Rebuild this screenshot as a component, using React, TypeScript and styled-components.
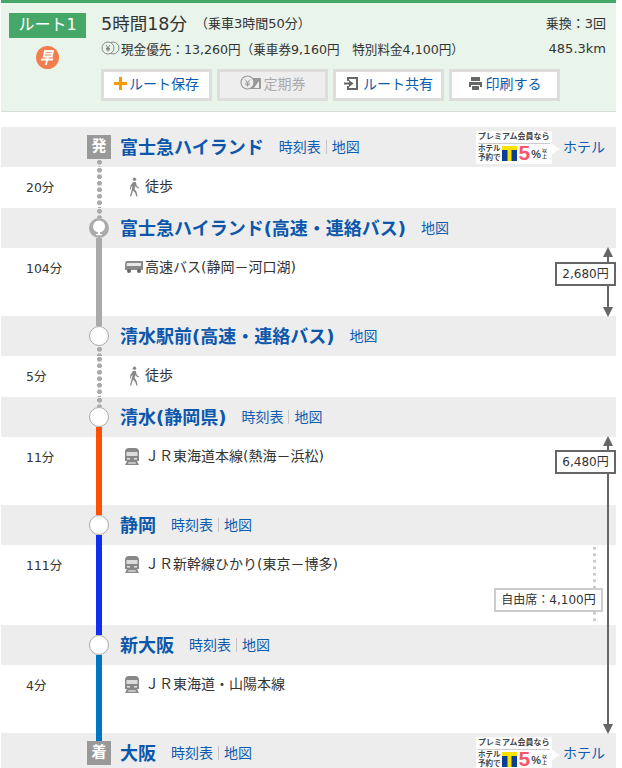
import React from "react";
import styled, { createGlobalStyle } from "styled-components";

const GlobalStyle = createGlobalStyle`
  html, body {
    margin: 0;
    padding: 0;
    background: #fff;
    overflow: hidden;
    height: 768px;
  }
  body {
    font-family: "DejaVu Sans", "Noto Sans CJK JP", sans-serif;
    color: #333;
  }
`;

const Page = styled.div`
  width: 615px;
  margin-left: 1px;
`;

const Summary = styled.section`
  box-sizing: border-box;
  height: 112px;
  background: #e9f4ea;
  border-top: 3px solid #45a869;
  border-bottom: 1px solid #d8dcd8;
  padding: 10px 10px 0 8px;
  display: grid;
  grid-template-columns: 77px 1fr;
  column-gap: 15px;
`;

const RouteSide = styled.div`
  display: flex;
  flex-direction: column;
  align-items: center;
  gap: 8px;
`;

const RouteBadge = styled.div`
  width: 77px;
  height: 25px;
  background: #45a869;
  color: #fff;
  font-size: 16px;
  line-height: 23px;
  text-align: center;
`;

const RouteMain = styled.div`
  display: flex;
  flex-direction: column;
`;

const InfoRow = styled.div`
  display: flex;
  align-items: center;
  justify-content: space-between;
  height: 18px;
  & + & {
    margin-top: 8px;
  }
`;

const InfoLeft = styled.div`
  display: flex;
  align-items: center;
`;

const Duration = styled.span`
  font-size: 17.5px;
  color: #333;
`;

const Ride = styled.span`
  font-size: 13px;
  margin-left: 8px;
`;

const Fare = styled.span`
  font-size: 12.6px;
  margin-left: 1px;
`;

const InfoRight = styled.span`
  font-size: 13px;
`;

const Buttons = styled.div`
  display: flex;
  gap: 5px;
  margin-top: 12px;
`;

const Button = styled.div<{ $disabled?: boolean }>`
  box-sizing: border-box;
  width: 111px;
  height: 32px;
  border: 3px solid #ddd;
  padding-bottom: 4px;
  background: ${(p) => (p.$disabled ? "#eee" : "#fff")};
  color: ${(p) => (p.$disabled ? "#aaa" : "#0b5cb0")};
  font-size: 14px;
  display: flex;
  align-items: center;
  justify-content: center;
  gap: 2px;
`;

const Timeline = styled.main`
  margin-top: 15px;
`;

const StationRow = styled.div`
  height: 40px;
  background: #ededed;
  display: grid;
  grid-template-columns: 86px 24px 1fr;
`;

const Rail = styled.div`
  display: flex;
  flex-direction: column;
  align-items: center;
`;

const Stub = styled.div<{ $kind?: string }>`
  flex: 1;
  width: ${(p) => (p.$kind === "dots" ? "5px" : "6px")};
  ${(p) =>
    p.$kind === "dots"
      ? `background: radial-gradient(circle at center, #aaa 2.4px, transparent 2.7px) center top / 5px 6.5px repeat-y;`
      : p.$kind
        ? `background: ${p.$kind};`
        : ""}
`;

const EndMark = styled.div`
  width: 24px;
  height: 24px;
  flex: none;
  background: #999;
  color: #fff;
  font-size: 15px;
  font-weight: 700;
  line-height: 22px;
  text-align: center;
`;

const Circle = styled.div`
  box-sizing: border-box;
  width: 20px;
  height: 20px;
  flex: none;
  border-radius: 50%;
  background: #fff;
  border: 1px solid #aaa;
`;

const StationBody = styled.div`
  display: flex;
  align-items: center;
  padding: 0 0 3px 9px;
`;

const StationName = styled.span`
  color: #0b57ab;
  font-size: 18px;
  font-weight: 700;
  margin-right: 15px;
`;

const Links = styled.span`
  display: flex;
  align-items: center;
  font-size: 14px;
  color: #0b5cb0;
`;

const LinkSep = styled.span`
  width: 1px;
  height: 14px;
  background: #c4c4c4;
  margin: 2px 5px 0;
`;

const HotelBox = styled.div`
  margin-left: auto;
  display: flex;
  align-items: center;
  margin-top: 3px;
`;

const Promo = styled.div`
  position: relative;
  box-sizing: border-box;
  width: 76px;
  height: 33px;
  background: #fff;
  color: #444;
  font-weight: 700;
  padding: 0 2px;
  margin-right: 11px;
  &::after {
    content: "";
    position: absolute;
    right: -8px;
    top: 13px;
    border-left: 8px solid #fff;
    border-top: 5px solid transparent;
    border-bottom: 5px solid transparent;
  }
`;

const PromoTop = styled.div`
  height: 12px;
  font-size: 8px;
  line-height: 11px;
  white-space: nowrap;
  border-bottom: 1px solid #ccc;
`;

const PromoBottom = styled.div`
  display: flex;
  align-items: center;
  height: 19px;
  gap: 1px;
`;

const PromoText = styled.div`
  font-size: 7.5px;
  line-height: 9px;
  white-space: nowrap;
`;

const PromoFive = styled.span`
  color: #f5566c;
  font-size: 21px;
  font-family: "Liberation Sans", sans-serif;
  line-height: 18px;
  margin-left: 1px;
`;

const PromoPct = styled.span`
  font-family: "Liberation Sans", sans-serif;
  font-size: 11px;
  line-height: 18px;
  margin-top: 2px;
`;

const PromoOver = styled.span`
  font-size: 5px;
  line-height: 6px;
  width: 5px;
`;

const Hotel = styled.span`
  color: #0b5cb0;
  font-size: 14px;
  margin: -3px 11px 0 0;
`;

const Segment = styled.div<{ $h: number }>`
  position: relative;
  height: ${(p) => p.$h}px;
  display: grid;
  grid-template-columns: 86px 24px 1fr;
`;

const Time = styled.div`
  padding: 12px 0 0 25px;
  font-size: 12.4px;
  line-height: 18px;
`;

const Transit = styled.div`
  display: flex;
  align-items: flex-start;
  padding: 10px 0 0 13px;
  font-size: 14px;
  line-height: 19px;
  color: #333;
  gap: 5px;
`;

const FareRail = styled.div<{ $h: number }>`
  position: absolute;
  z-index: 2;
  right: 0;
  top: -1px;
  height: ${(p) => p.$h}px;
  width: 62px;
  display: flex;
  flex-direction: column;
  align-items: flex-end;
`;

const ArrowUp = styled.div`
  flex: none;
  margin-right: 3px;
  border-left: 5px solid transparent;
  border-right: 5px solid transparent;
  border-bottom: 10px solid #666;
`;

const ArrowDown = styled(ArrowUp)`
  border-bottom: 0;
  border-top: 10px solid #666;
`;

const RailLine = styled.div<{ $fixed?: number }>`
  width: 2px;
  margin-right: 7px;
  background: #666;
  flex: ${(p) => (p.$fixed ? `0 0 ${p.$fixed}px` : "1")};
`;

const FareBox = styled.div`
  box-sizing: border-box;
  width: 61px;
  height: 24px;
  flex: none;
  border: 2px solid #666;
  background: #fff;
  font-size: 12px;
  line-height: 20px;
  text-align: center;
  white-space: nowrap;
`;

const SeatDots = styled.div`
  position: absolute;
  right: 20px;
  top: 0;
  bottom: 0;
  width: 3px;
  background: radial-gradient(circle at center, #ccc 1.4px, transparent 1.7px) center top / 3px 6.5px repeat-y;
`;

const SeatBox = styled.div`
  position: absolute;
  right: 13px;
  top: 43px;
  box-sizing: border-box;
  width: 109px;
  height: 24px;
  border: 2px solid #ccc;
  background: #fff;
  font-size: 12px;
  line-height: 20px;
  text-align: center;
  white-space: nowrap;
`;

const TrainIcon = () => (
  <svg width="16" height="19" viewBox="0 0 16 19">
    <path d="M1 5 Q1 1 5 1 H11 Q15 1 15 5 V14 H1 Z" fill="#888" />
    <rect x="2.5" y="5" width="11" height="4" fill="#ddd" />
    <rect x="3" y="11" width="3" height="1.6" fill="#ddd" />
    <rect x="10" y="11" width="3" height="1.6" fill="#ddd" />
    <path d="M3 14 L1 18 H15 L13 14 Z M4.4 15.4 L4 16.6 H12 L11.6 15.4 Z" fill="#888" fillRule="evenodd" />
  </svg>
);

const BusIcon = () => (
  <svg width="20" height="14" viewBox="0 0 20 14" style={{ marginTop: 2, marginRight: -4 }}>
    <path d="M2 1 H19 V10 H1 V4 Z" fill="#888" />
    <path d="M3 3 H17 V6 H2.4 Z" fill="#e8e8e8" />
    <circle cx="5" cy="11" r="2" fill="#666" />
    <circle cx="15" cy="11" r="2" fill="#666" />
  </svg>
);

const WalkIcon = () => (
  <svg width="13" height="20" viewBox="0 0 13 20" style={{ marginLeft: 3 }}>
    <circle cx="7.5" cy="2.2" r="1.7" fill="#888" />
    <path
      d="M6 5 L8.8 5 L9.8 9 L12.2 10.8 L11.6 11.6 L8.8 10 L8.4 8.6 L7.6 12 L9.6 15 L10.6 19.4 L9.4 19.4 L8.2 16 L6 13.4 L4.2 19.4 L3 19.4 L5.6 9 L4.4 10 L3.8 12.6 L2.8 12.2 L3.6 8.6 Z"
      fill="#888"
    />
  </svg>
);

const EarlyIcon = () => (
  <svg width="23" height="23" viewBox="0 0 23 23">
    <circle cx="11.5" cy="11.5" r="11.5" fill="#f47d4f" />
    <g transform="skewX(-12) translate(3 0)" fill="none" stroke="#fff" strokeWidth="1.8">
      <rect x="7" y="5" width="8" height="5.5" />
      <path d="M7 7.7 H15 M5 13.5 H17 M11 10.5 V19" />
    </g>
  </svg>
);

const CoinIcon = () => (
  <svg width="19" height="14" viewBox="0 0 19 14">
    <circle cx="12" cy="7" r="6" fill="none" stroke="#888" strokeWidth="1" />
    <circle cx="7" cy="7" r="6" fill="#e9f4ea" stroke="#888" strokeWidth="1" />
    <path d="M5 4 L7 7 L9 4 M7 7 V10.4 M5 7.4 H9 M5 8.8 H9" stroke="#777" strokeWidth="0.9" fill="none" />
  </svg>
);

const PassIcon = () => (
  <svg width="22" height="16" viewBox="0 0 22 16">
    <rect x="9" y="3" width="12" height="11" rx="1" fill="#999" />
    <path d="M14 13 L19 6 V13 Z" fill="#eee" />
    <circle cx="7.5" cy="7.5" r="6.5" fill="#eee" stroke="#999" strokeWidth="1.2" />
    <path d="M5 4.5 L7.5 7.5 L10 4.5 M7.5 7.5 V11.5 M5.2 8 H9.8 M5.2 9.8 H9.8" stroke="#999" strokeWidth="1" fill="none" />
  </svg>
);

const ShareIcon = () => (
  <svg width="15" height="15" viewBox="0 0 15 15" style={{ marginRight: 2 }}>
    <path d="M3 5 V1 H14 V14 H3 V10 H5 V12 H12 V3 H5 V5 Z" fill="#666" />
    <path d="M0 6.5 H5 V4 L9.5 7.5 L5 11 V8.5 H0 Z" fill="#666" />
  </svg>
);

const PrintIcon = () => (
  <svg width="15" height="15" viewBox="0 0 15 15" style={{ marginRight: 1 }}>
    <path d="M3 1 H12 V5 H3 Z" fill="#666" />
    <path d="M1 6 H14 V11 H12 V9 H3 V11 H1 Z" fill="#666" />
    <path d="M4 10 H11 V14 H4 Z" fill="#666" />
  </svg>
);

const PlusIcon = () => (
  <svg width="13" height="13" viewBox="0 0 13 13">
    <path d="M5 0 H8 V5 H13 V8 H8 V13 H5 V8 H0 V5 H5 Z" fill="#f59a00" />
  </svg>
);

const BusStopCircle = () => (
  <svg width="20" height="20" viewBox="0 0 20 20" style={{ flex: "none" }}>
    <circle cx="10" cy="10" r="10" fill="#aaa" />
    <circle cx="10" cy="8.6" r="6" fill="#fff" />
    <rect x="9" y="13" width="2" height="4" fill="#fff" />
    <rect x="7" y="16" width="6" height="1.2" fill="#fff" />
  </svg>
);

const TPoint = () => (
  <svg width="15" height="15" viewBox="0 0 15 15" style={{ flex: "none" }}>
    <rect width="15" height="15" fill="#ffe100" />
    <rect y="4" width="5.5" height="11" fill="#0b3f94" />
    <rect x="9.5" y="4" width="5.5" height="11" fill="#0b3f94" />
  </svg>
);

function HotelPromo() {
  return (
    <HotelBox>
      <Promo>
        <PromoTop>プレミアム会員なら</PromoTop>
        <PromoBottom>
          <PromoText>
            ホテル
            <br />
            予約で
          </PromoText>
          <TPoint />
          <PromoFive>5</PromoFive>
          <PromoPct>%</PromoPct>
          <PromoOver>以上</PromoOver>
        </PromoBottom>
      </Promo>
      <Hotel>ホテル</Hotel>
    </HotelBox>
  );
}

type StationProps = {
  name: string;
  table?: boolean;
  mark?: string;
  stop?: boolean;
  above?: string;
  below?: string;
  hotel?: boolean;
};

function Station({ name, table, mark, stop, above, below, hotel }: StationProps) {
  return (
    <StationRow>
      <div />
      <Rail>
        <Stub $kind={above} />
        {mark ? <EndMark>{mark}</EndMark> : stop ? <BusStopCircle /> : <Circle />}
        <Stub $kind={below} />
      </Rail>
      <StationBody>
        <StationName>{name}</StationName>
        <Links>
          {table && (
            <>
              時刻表
              <LinkSep />
            </>
          )}
          地図
        </Links>
        {hotel && <HotelPromo />}
      </StationBody>
    </StationRow>
  );
}

type LegProps = {
  h: number;
  time: string;
  line: string;
  icon: React.ReactNode;
  label: string;
  children?: React.ReactNode;
};

function Leg({ h, time, line, icon, label, children }: LegProps) {
  return (
    <Segment $h={h}>
      <Time>{time}</Time>
      <Rail>
        <Stub $kind={line} />
      </Rail>
      <Transit>
        {icon}
        {label}
      </Transit>
      {children}
    </Segment>
  );
}

export default function App() {
  return (
    <Page>
      <GlobalStyle />
      <Summary>
        <RouteSide>
          <RouteBadge>ルート1</RouteBadge>
          <EarlyIcon />
        </RouteSide>
        <RouteMain>
          <InfoRow>
            <InfoLeft>
              <Duration>5時間18分</Duration>
              <Ride>（乗車3時間50分）</Ride>
            </InfoLeft>
            <InfoRight>乗換：3回</InfoRight>
          </InfoRow>
          <InfoRow>
            <InfoLeft>
              <CoinIcon />
              <Fare>現金優先：13,260円（乗車券9,160円　特別料金4,100円）</Fare>
            </InfoLeft>
            <InfoRight>485.3km</InfoRight>
          </InfoRow>
          <Buttons>
            <Button>
              <PlusIcon />
              ルート保存
            </Button>
            <Button $disabled>
              <PassIcon />
              定期券
            </Button>
            <Button>
              <ShareIcon />
              ルート共有
            </Button>
            <Button>
              <PrintIcon />
              印刷する
            </Button>
          </Buttons>
        </RouteMain>
      </Summary>
      <Timeline>
        <Station name="富士急ハイランド" table mark="発" below="dots" hotel />
        <Leg h={41} time="20分" line="dots" icon={<WalkIcon />} label="徒歩" />
        <Station name="富士急ハイランド(高速・連絡バス)" stop above="dots" below="#aaa" />
        <Leg h={68} time="104分" line="#aaa" icon={<BusIcon />} label="高速バス(静岡－河口湖)">
          <FareRail $h={70}>
            <ArrowUp />
            <RailLine $fixed={5} />
            <FareBox>2,680円</FareBox>
            <RailLine />
            <ArrowDown />
          </FareRail>
        </Leg>
        <Station name="清水駅前(高速・連絡バス)" above="#aaa" below="dots" />
        <Leg h={41} time="5分" line="dots" icon={<WalkIcon />} label="徒歩" />
        <Station name="清水(静岡県)" table above="dots" below="#ff4f00" />
        <Leg h={68} time="11分" line="#ff4f00" icon={<TrainIcon />} label="ＪＲ東海道本線(熱海－浜松)">
          <FareRail $h={298}>
            <ArrowUp />
            <RailLine $fixed={4} />
            <FareBox>6,480円</FareBox>
            <RailLine />
            <ArrowDown />
          </FareRail>
        </Leg>
        <Station name="静岡" table above="#ff4f00" below="#0f2ef0" />
        <Leg h={80} time="111分" line="#0f2ef0" icon={<TrainIcon />} label="ＪＲ新幹線ひかり(東京－博多)">
          <SeatDots />
          <SeatBox>自由席：4,100円</SeatBox>
        </Leg>
        <Station name="新大阪" table above="#0f2ef0" below="#0075c2" />
        <Leg h={68} time="4分" line="#0075c2" icon={<TrainIcon />} label="ＪＲ東海道・山陽本線" />
        <Station name="大阪" table mark="着" above="#0075c2" hotel />
      </Timeline>
    </Page>
  );
}
